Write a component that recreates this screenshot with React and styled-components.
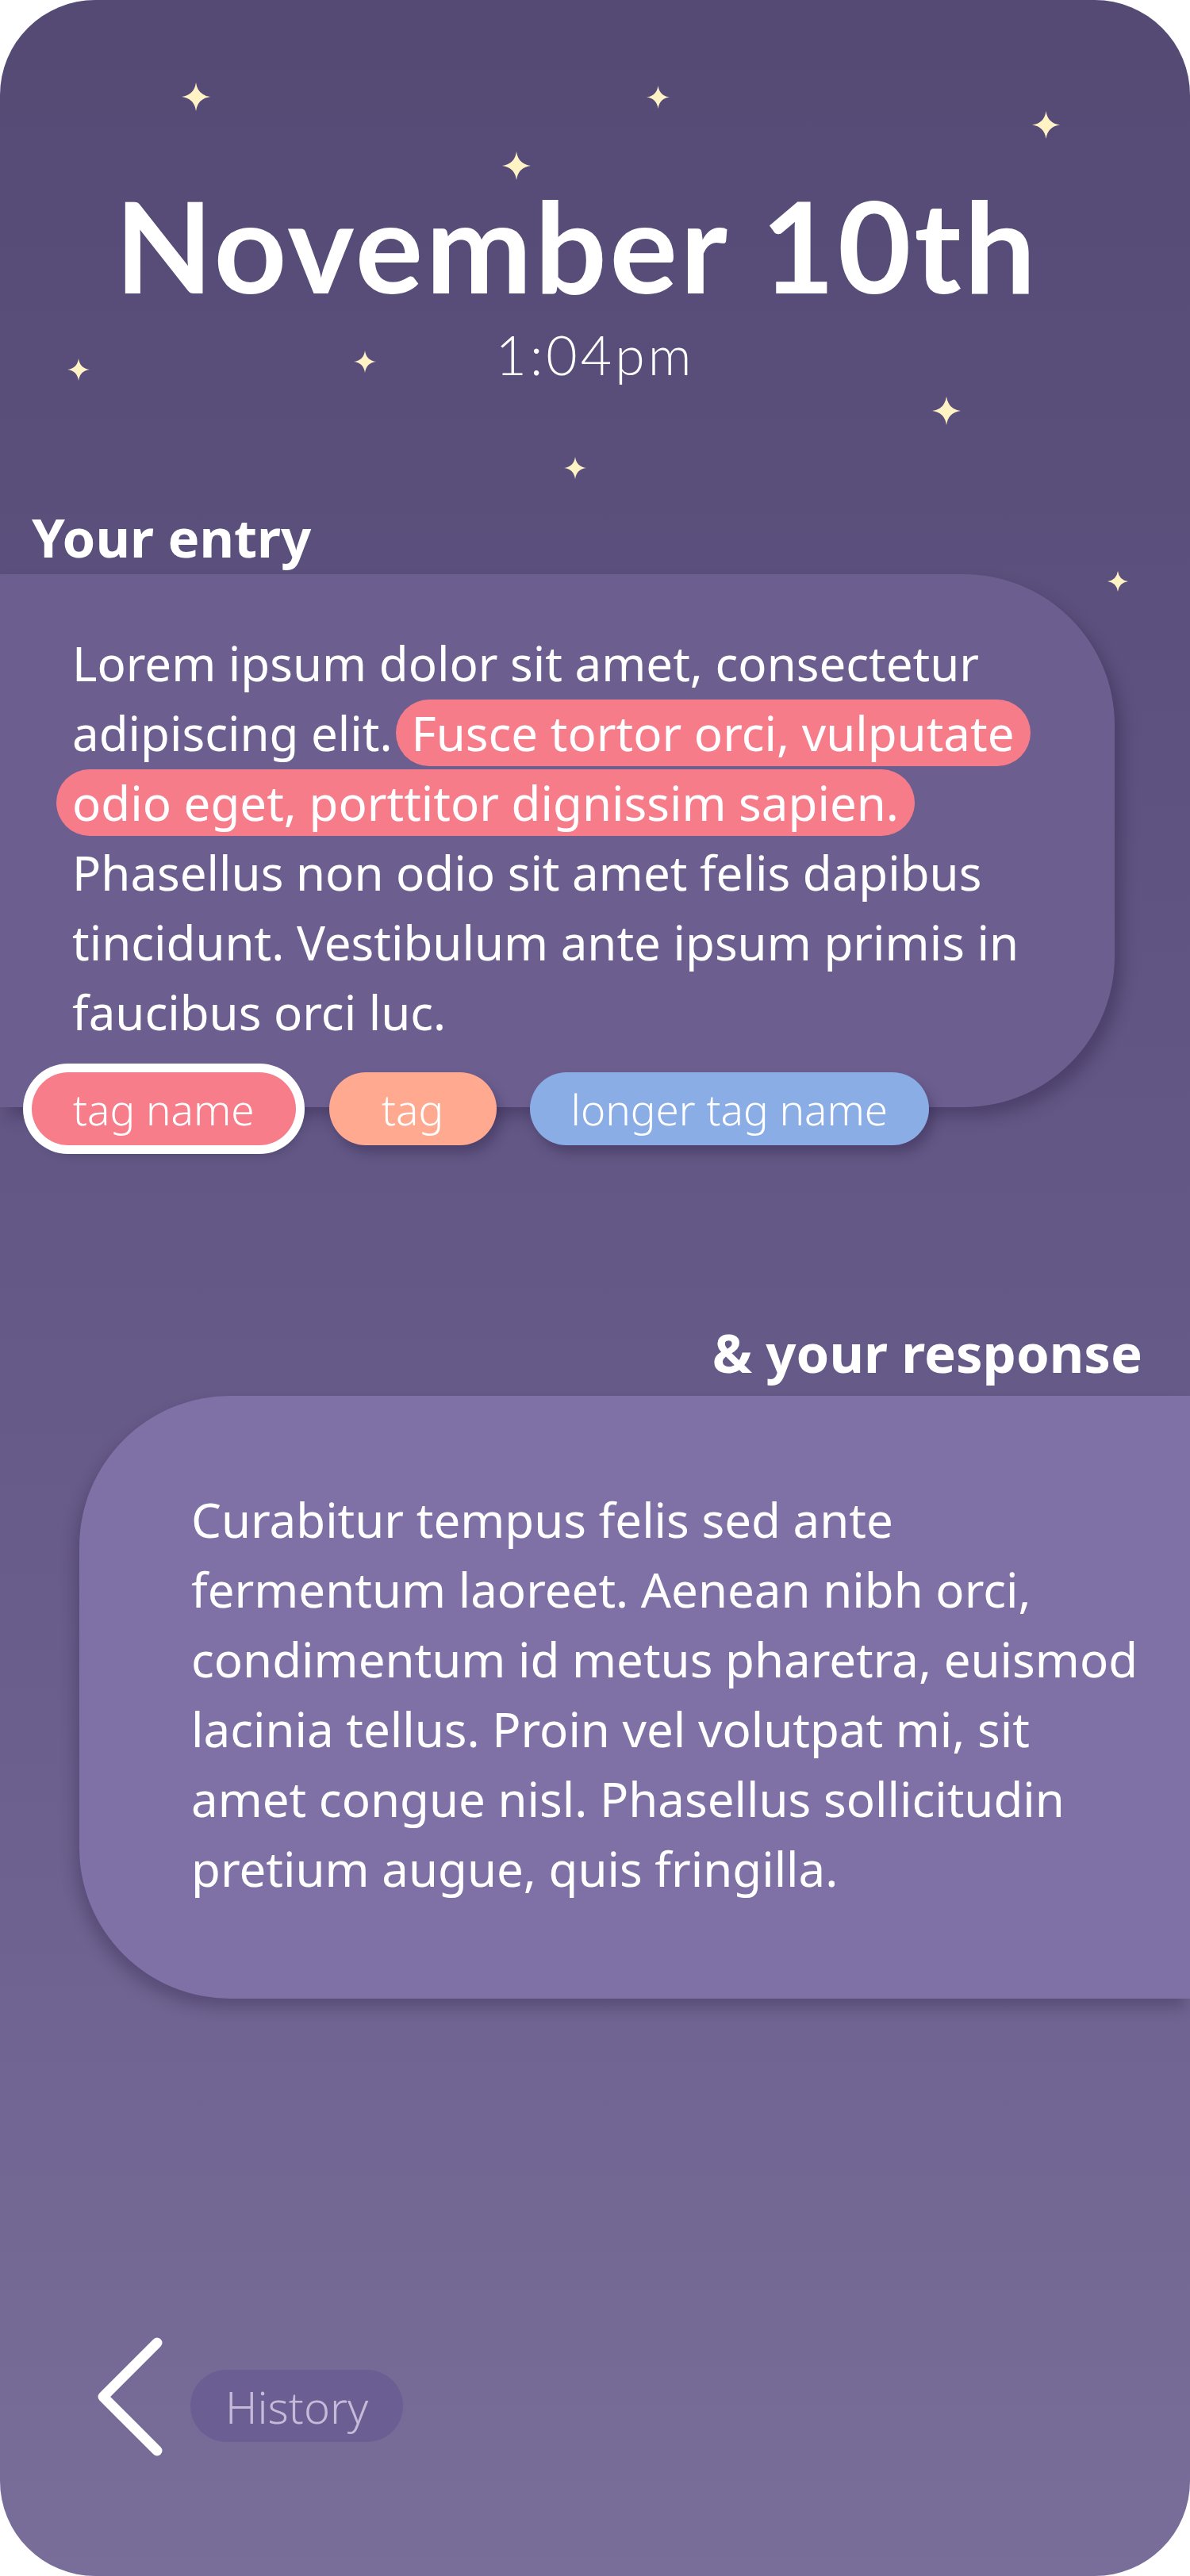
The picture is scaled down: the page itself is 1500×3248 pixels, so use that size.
import React from 'react';
import styled, { createGlobalStyle } from 'styled-components';

const GlobalStyle = createGlobalStyle`
  html, body {
    margin: 0;
    padding: 0;
    background: #ffffff;
  }
  body {
    font-family: 'Noto Sans', 'Lato', sans-serif;
    -webkit-font-smoothing: antialiased;
  }
`;

const Screen = styled.div`
  position: relative;
  width: 1500px;
  height: 3248px;
  border-radius: 120px;
  overflow: hidden;
  display: flex;
  flex-direction: column;
  color: #ffffff;
  background: linear-gradient(180deg, #544a74 0%, #5e5280 30%, #685c8a 60%, #796d9a 100%);
`;

const Star = styled.svg`
  position: absolute;
  fill: #fff3c6;
`;

const Title = styled.h1`
  margin: 228px 0 0;
  padding-right: 46px;
  font-family: 'Lato', 'Noto Sans', sans-serif;
  font-size: 160px;
  line-height: 160px;
  font-weight: 700;
  letter-spacing: 3.5px;
  text-align: center;
`;

const Time = styled.div`
  margin-top: 25px;
  font-family: 'Lato', 'Noto Sans', sans-serif;
  font-size: 68px;
  line-height: 68px;
  font-weight: 300;
  letter-spacing: 4px;
  text-align: center;
`;

const SectionLabel = styled.h2`
  margin: ${p => p.$top}px 0 0;
  padding: ${p => (p.$right ? '0 60px 0 0' : '0 0 0 40px')};
  font-size: 67px;
  line-height: 66px;
  font-weight: 700;
  text-align: ${p => (p.$right ? 'right' : 'left')};
`;

const EntryCard = styled.div`
  margin-top: 14px;
  width: 1405px;
  box-sizing: border-box;
  padding: 68px 0 76px 91px;
  background: #6c5f90;
  border-radius: 0 190px 190px 0;
  box-shadow: 10px 12px 18px rgba(40, 30, 66, 0.35);
`;

const ResponseCard = styled.div`
  margin: 22px 0 0 100px;
  box-sizing: border-box;
  padding: 112px 0 120px 141px;
  background: #7f70a6;
  border-radius: 190px 0 0 190px;
  box-shadow: -6px 12px 18px rgba(40, 30, 66, 0.3);
`;

const BodyText = styled.p`
  margin: 0;
  font-size: 60px;
  line-height: 88px;
  font-weight: 400;
  white-space: nowrap;
`;

const Highlight = styled.span`
  background: #f67c8a;
  border-radius: 44px;
  padding: 1px 20px;
  margin-left: ${p => p.$shift}px;
`;

const TagRow = styled.div`
  margin-top: -44px;
  padding-left: 40px;
  display: flex;
  align-items: center;
  gap: 42px;
`;

const Tag = styled.div`
  height: 92px;
  min-width: 211px;
  box-sizing: border-box;
  padding: 0 52px;
  display: flex;
  align-items: center;
  justify-content: center;
  border-radius: 46px;
  background: ${p => p.$color};
  font-size: 53px;
  font-weight: 300;
  box-shadow: ${p => (p.$selected ? '0 0 0 11px #ffffff, ' : '')}6px 10px 14px rgba(40, 30, 66, 0.35);
`;

const Footer = styled.div`
  margin-top: 422px;
  padding-left: 118px;
  display: flex;
  align-items: flex-start;
  gap: 30px;
`;

const BackIcon = styled.svg`
  width: 92px;
  height: 160px;
  fill: none;
  stroke: #ffffff;
  stroke-width: 13;
  stroke-linecap: round;
  stroke-linejoin: round;
`;

const HistoryPill = styled.div`
  margin-top: 46px;
  width: 268px;
  height: 91px;
  box-sizing: border-box;
  padding-left: 44px;
  display: flex;
  align-items: center;
  border-radius: 46px;
  background: #6b5e93;
  color: #c5bad7;
  font-size: 56px;
  font-weight: 300;
`;

const stars = [
  { x: 247, y: 122, s: 36 },
  { x: 829, y: 122, s: 29 },
  { x: 1318, y: 157, s: 35 },
  { x: 651, y: 209, s: 36 },
  { x: 99, y: 466, s: 28 },
  { x: 460, y: 456, s: 28 },
  { x: 1193, y: 518, s: 36 },
  { x: 725, y: 590, s: 28 },
  { x: 1409, y: 733, s: 26 },
];

const tags = [
  { label: 'tag name', color: '#f77d8a', selected: true },
  { label: 'tag', color: '#ffa990' },
  { label: 'longer tag name', color: '#8aade6' },
];

export default function App() {
  return (
    <>
      <GlobalStyle />
      <Screen>
        {stars.map((st, i) => (
          <Star
            key={i}
            viewBox="0 0 24 24"
            style={{ left: st.x - st.s / 2, top: st.y - st.s / 2, width: st.s, height: st.s }}
          >
            <path d="M12 0 Q13.4 10.6 24 12 Q13.4 13.4 12 24 Q10.6 13.4 0 12 Q10.6 10.6 12 0Z" />
          </Star>
        ))}

        <Title>November 10th</Title>
        <Time>1:04pm</Time>

        <SectionLabel $top={163}>Your entry</SectionLabel>
        <EntryCard>
          <BodyText>
            Lorem ipsum dolor sit amet, consectetur
            <br />
            adipiscing elit.<Highlight $shift={4}>Fusce tortor orci, vulputate</Highlight>
            <br />
            <Highlight $shift={-20}>odio eget, porttitor dignissim sapien.</Highlight>
            <br />
            Phasellus non odio sit amet felis dapibus
            <br />
            tincidunt. Vestibulum ante ipsum primis in
            <br />
            faucibus orci luc.
          </BodyText>
        </EntryCard>

        <TagRow>
          {tags.map(t => (
            <Tag key={t.label} $color={t.color} $selected={t.selected}>
              {t.label}
            </Tag>
          ))}
        </TagRow>

        <SectionLabel $top={228} $right>&amp; your response</SectionLabel>
        <ResponseCard>
          <BodyText>
            Curabitur tempus felis sed ante
            <br />
            fermentum laoreet. Aenean nibh orci,
            <br />
            condimentum id metus pharetra, euismod
            <br />
            lacinia tellus. Proin vel volutpat mi, sit
            <br />
            amet congue nisl. Phasellus sollicitudin
            <br />
            pretium augue, quis fringilla.
          </BodyText>
        </ResponseCard>

        <Footer>
          <BackIcon viewBox="0 0 92 160">
            <path d="M80 12 L12 80 L80 148" />
          </BackIcon>
          <HistoryPill>History</HistoryPill>
        </Footer>
      </Screen>
    </>
  );
}
